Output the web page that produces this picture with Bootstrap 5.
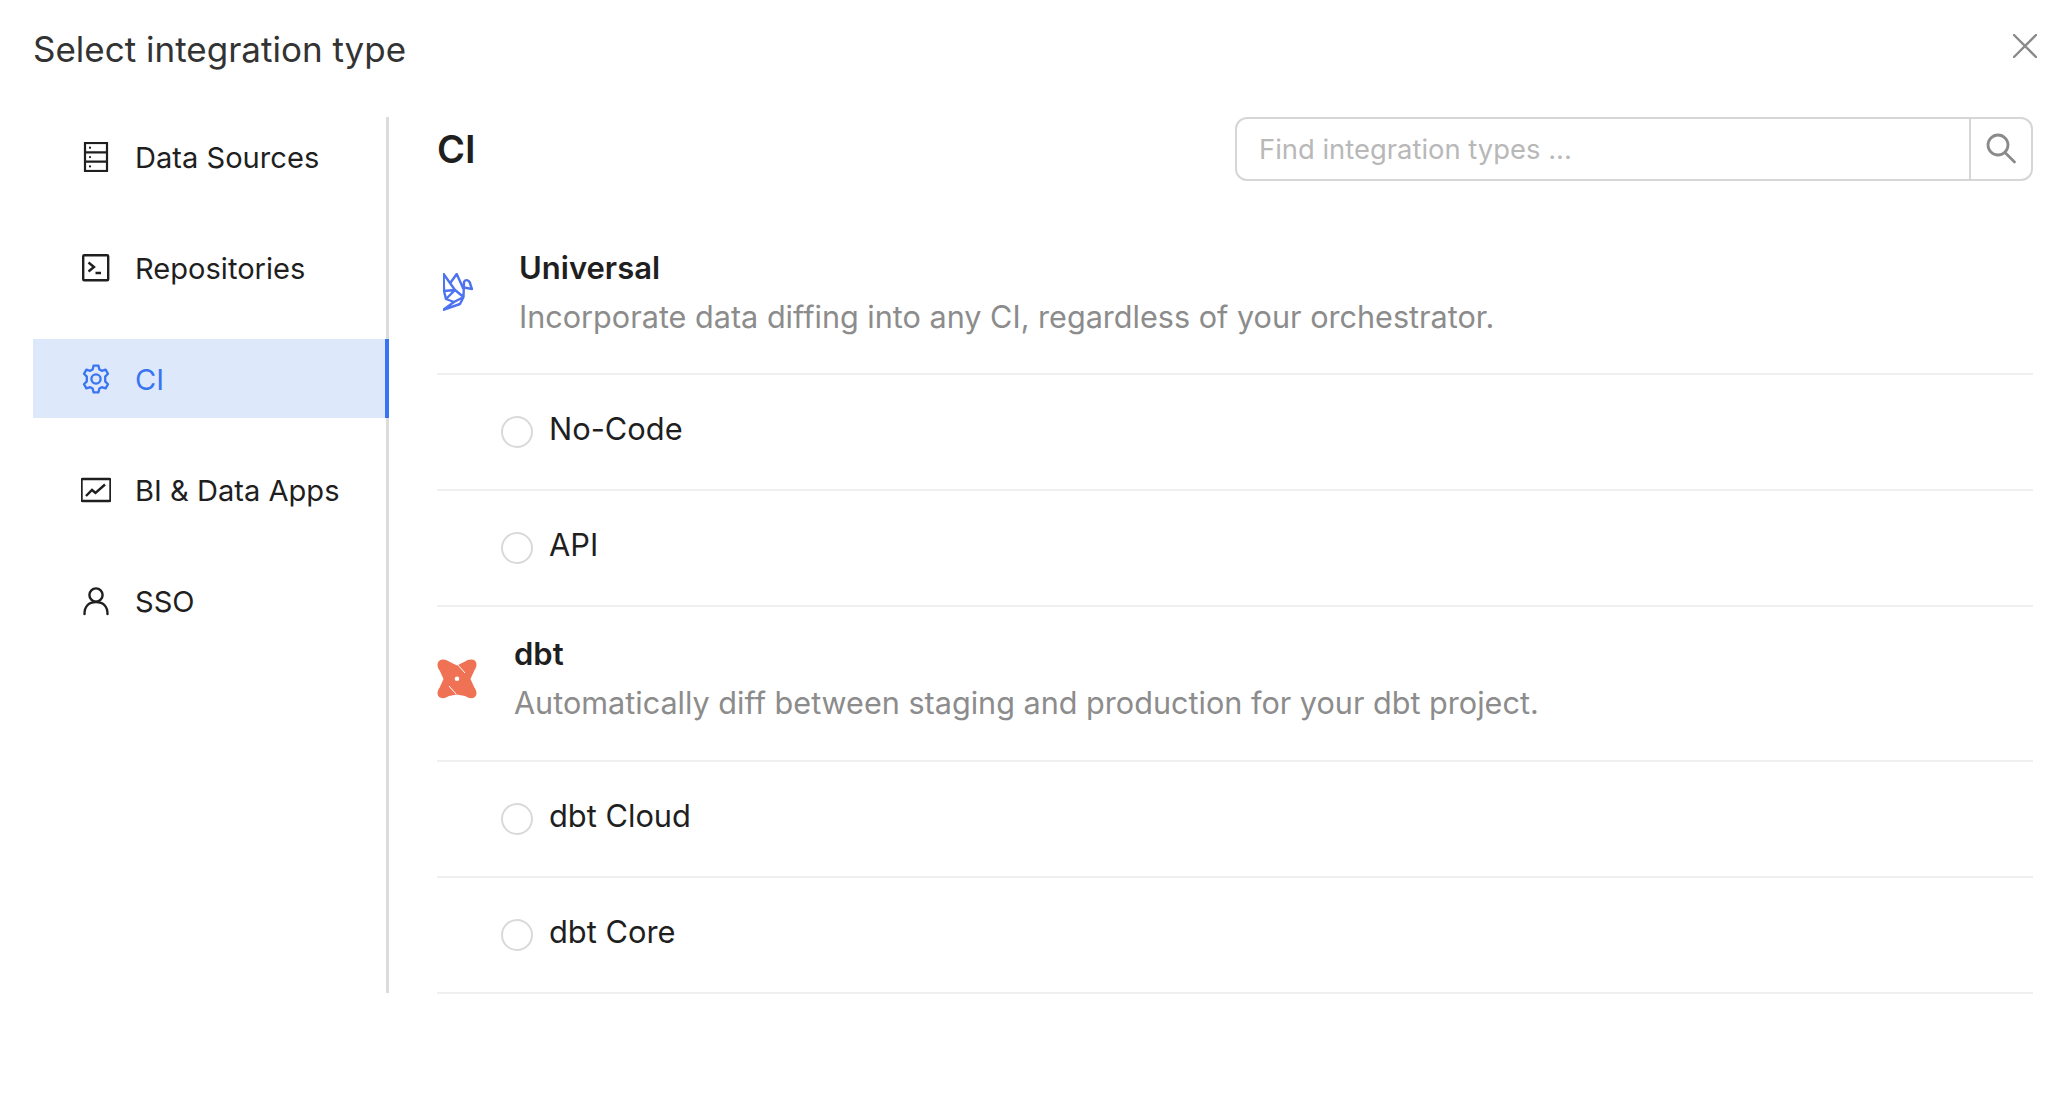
<!DOCTYPE html>
<html lang="en">
<head>
<meta charset="utf-8">
<title>Select integration type</title>
<link href="https://cdn.jsdelivr.net/npm/bootstrap@5.3.0/dist/css/bootstrap.min.css" rel="stylesheet">
<style>
html,body{height:100%;}
body{font-family:Inter,"Liberation Sans",sans-serif;color:#1f1f1f;background:#fff;overflow:hidden;}
.dlg{width:2072px;height:1094px;padding:0 39px 0 33px;}
.dlg-head{height:117px;padding-top:27px;}
.dlg-title{font-size:35px;line-height:44px;font-weight:400;color:#333;margin:0;}
.dlg-close{position:absolute;top:32px;right:35px;width:24px;height:24px;color:#8a8a8a;padding:0;border:0;background:none;display:block;}
.side{width:356px;height:876px;border-right:3px solid #dcdcdc;}
.side-link{height:79px;margin-bottom:32px;padding:2px 0 0 48px;color:#1f1f1f;font-size:29.1px;gap:24px;margin-right:-3px;}
.side-link:hover{color:#1f1f1f;}
.side-link.active{background:#dde8fb;color:#3a74f2;border-right:4px solid #3a74f2;}
.side-link svg{width:30px;height:30px;flex:none;margin-top:-2px;}
.body-col{margin-left:48px;min-width:0;}
.top-row{height:64px;}
.cat-title{font-size:38px;font-weight:600;margin:0;line-height:64px;}
.find{width:798px;height:64px;}
.find .form-control{font-family:inherit;font-size:27.4px;border:2px solid #d6d6d6;border-radius:12px 0 0 12px;padding:2px 22px 0;box-shadow:none;color:#1f1f1f;}
.find .form-control::placeholder{color:#b8b8b8;}
.find .input-group-text{background:#fff;border:2px solid #d6d6d6;border-left:0;border-radius:0 12px 12px 0;width:62px;padding:0;justify-content:center;color:#8a8a8a;margin-left:0!important;}
.find svg{width:32px;height:32px;}
.grp-head{border-bottom:2px solid #efefef;}
.grp-a{height:194px;padding-top:67px;}
.grp-a svg{margin:25px 46px 0 6px;flex:none;}
.grp-b{height:155px;padding-bottom:10px;}
.grp-b svg{margin-right:37px;flex:none;}
.grp-name{font-size:31px;font-weight:600;line-height:40px;color:#1f1f1f;}
.grp-desc{font-size:30.6px;line-height:40px;color:#8c8c8c;margin-top:9px;}
.opt{height:116px;border-bottom:2px solid #efefef;padding-left:64px;gap:16px;margin:0;}
.opt .form-check-input{width:32px;height:32px;margin:0 0 1px;border:2.500px solid #d9d9d9;flex:none;float:none;}
.opt-label{font-size:30.8px;line-height:40px;color:#1f1f1f;margin-top:-6px;}
</style>
</head>
<body>
<div class="dlg position-relative">
  <div class="dlg-head"><h1 class="dlg-title">Select integration type</h1></div>
  <button class="dlg-close" type="button" aria-label="Close"><svg viewBox="0 0 24 24" width="24" height="24" fill="none" stroke="currentColor" stroke-width="2.400" stroke-linecap="round"><path d="M1 1 23 23M23 1 1 23"/></svg></button>
  <div class="d-flex">
    <nav class="side nav flex-column flex-nowrap flex-shrink-0">
      <a class="side-link nav-link d-flex align-items-center" href="#"><svg viewBox="0 0 30 30" fill="none" stroke="currentColor" stroke-width="2.200"><rect x="4" y="1" width="22" height="28"/><path d="M4 10.300h22M4 19.700h22"/><path d="M9 5.700v.1M9 15v.1M9 24.300v.1" stroke-linecap="round" stroke-width="2.200"/></svg>Data Sources</a>
      <a class="side-link nav-link d-flex align-items-center" href="#"><svg viewBox="0 0 30 30" fill="none" stroke="currentColor" stroke-width="2.400"><rect x="2.200" y="2.200" width="25" height="25" rx="1"/><path d="M7.500 9.500l5.500 4.500-5.500 4.500M14.500 20h5.500"/></svg>Repositories</a>
      <a class="side-link nav-link active d-flex align-items-center" href="#"><svg viewBox="0 0 30 30" fill="none" stroke="currentColor" stroke-width="2.300" stroke-linejoin="round"><circle cx="15" cy="15" r="4.600"/><path d="M12.600 1.600h4.800l1 3.900 2.400 1.300 3.800-1.100 2.400 4.100-2.800 2.800v4.800l2.800 2.800-2.400 4.100-3.800-1.100-2.400 1.300-1 3.900h-4.800l-1-3.900-2.400-1.300-3.800 1.100-2.400-4.100 2.800-2.800v-4.800l-2.800-2.800 2.400-4.100 3.800 1.100 2.400-1.300z"/></svg>CI</a>
      <a class="side-link nav-link d-flex align-items-center" href="#"><svg viewBox="0 0 30 30" fill="none" stroke="currentColor" stroke-width="2.400"><rect x="0.500" y="4" width="29" height="22" rx="1"/><path d="M5 21l6-6 3.500 3L24 9.500"/></svg>BI &amp; Data Apps</a>
      <a class="side-link nav-link d-flex align-items-center" href="#"><svg viewBox="0 0 30 30" fill="none" stroke="currentColor" stroke-width="2.400" stroke-linecap="round"><circle cx="15" cy="9" r="6.600"/><path d="M3.500 28c0-7 4-12 11.500-12s11.500 5 11.500 12"/></svg>SSO</a>
    </nav>
    <main class="body-col flex-grow-1">
      <div class="top-row d-flex justify-content-between align-items-center">
        <h2 class="cat-title">CI</h2>
        <div class="find input-group flex-nowrap">
          <input class="form-control" type="text" placeholder="Find integration types ...">
          <span class="input-group-text"><svg viewBox="0 0 32 32" fill="none" stroke="currentColor" stroke-width="2.800" stroke-linecap="round"><circle cx="13" cy="12" r="10"/><path d="M20 19.500 29.500 29"/></svg></span>
        </div>
      </div>
      <div class="grp-head grp-a d-flex align-items-start">
        <svg width="30" height="38" viewBox="0 0 30 38" fill="none" stroke="#4e73ee" stroke-width="2.400" stroke-linejoin="round" stroke-linecap="round"><path d="M.6 1 1 18l11-1zM8 9l5.700-8L20.500 16M12 17l8.500 7 .5-15c1-3 6-2.500 6.500 3l1.500 4-7.800-1.500M1 18l2 8 9-9M3 26l8 3 9.500-5M11 29 0 37l17-6 3.500-7"/></svg>
        <div><div class="grp-name">Universal</div><div class="grp-desc">Incorporate data diffing into any CI, regardless of your orchestrator.</div></div>
      </div>
      <label class="opt form-check d-flex align-items-center"><input class="form-check-input" type="radio" name="u"><span class="opt-label">No-Code</span></label>
      <label class="opt form-check d-flex align-items-center"><input class="form-check-input" type="radio" name="u"><span class="opt-label">API</span></label>
      <div class="grp-head grp-b d-flex align-items-center">
        <svg width="40" height="40" viewBox="0 0 40 40"><path fill="#ef7254" fill-rule="evenodd" d="M5.500.5C8 .3 10 1.200 12 2.500L20 6.500 28 2.500C30 1.200 32.500.2 35 .5 38 .9 39.800 3 39.500 6 39.300 8 38.300 10 37.200 11.800L33.500 20l3.700 8.200C38.500 30.200 39.600 32 39.500 34.500 39.300 37.500 37 39.300 34 39.200 32 39.100 30 38.200 28 37L20 35.500 12 37C10 38.200 8 39.200 6 39.200 3 39.200.7 37.300.5 34.500.4 32 1.500 30.300 2.800 28.200L6.500 20 2.800 11.800C1.500 10 .5 8 .5 6 .5 3 2.500.7 5.500.5zM20 17.500a2.300 2.300 0 1 0 0 4.600 2.300 2.300 0 0 0 0-4.600z"/><path d="M21 6 28 14M19 35 12 27" stroke="#fff" stroke-width="1" fill="none"/></svg>
        <div><div class="grp-name">dbt</div><div class="grp-desc">Automatically diff between staging and production for your dbt project.</div></div>
      </div>
      <label class="opt form-check d-flex align-items-center"><input class="form-check-input" type="radio" name="v"><span class="opt-label">dbt Cloud</span></label>
      <label class="opt form-check d-flex align-items-center"><input class="form-check-input" type="radio" name="v"><span class="opt-label">dbt Core</span></label>
    </main>
  </div>
</div>
<script src="https://cdn.jsdelivr.net/npm/bootstrap@5.3.0/dist/js/bootstrap.bundle.min.js"></script>
</body>
</html>
